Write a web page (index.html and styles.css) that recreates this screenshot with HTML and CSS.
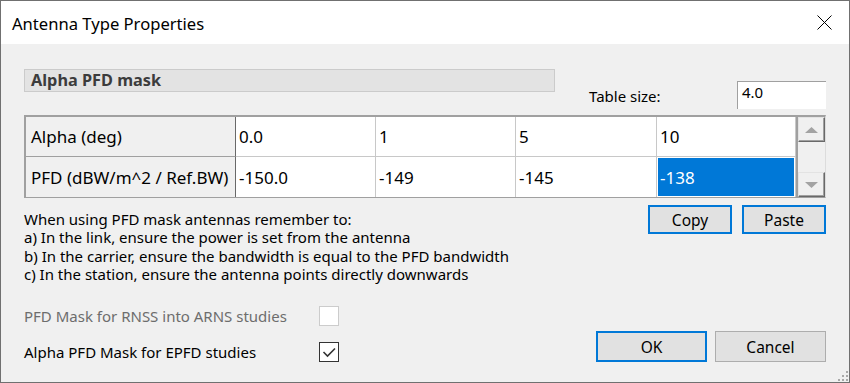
FILE: index.html
```html
<!DOCTYPE html>
<html lang="en">
  <head>
    <meta charset="UTF-8" />
    <title>Antenna Type Properties</title>
    <link rel="stylesheet" href="styles.css">
  </head>
  <body>
    <div class="dialog">
      <div class="titlebar">
        <span class="title">Antenna Type Properties</span>
        <svg class="close-icon" width="15" height="15" viewBox="0 0 15 15">
          <path d="M0.5 0.5 L14.5 14.5 M14.5 0.5 L0.5 14.5" stroke="#000" stroke-width="1" fill="none" />
        </svg>
      </div>

      <div class="content">
        <div class="top-row">
          <div class="group-header">Alpha PFD mask</div>
          <div class="table-size">
            <span class="table-size-label">Table size:</span>
            <div class="text-input">4.0</div>
          </div>
        </div>

        <div class="grid-box">
          <div class="grid">
            <div class="cell head">Alpha (deg)</div>
            <div class="cell">0.0</div>
            <div class="cell">1</div>
            <div class="cell">5</div>
            <div class="cell">10</div>
            <div class="cell head last-row">PFD (dBW/m^2 / Ref.BW)</div>
            <div class="cell last-row">-150.0</div>
            <div class="cell last-row">-149</div>
            <div class="cell last-row">-145</div>
            <div class="cell last-row selected">-138</div>
          </div>
          <div class="vscroll">
            <div class="scroll-btn">
              <svg width="13" height="6" viewBox="0 0 13 6"><path d="M6.5 0 L13 6 L0 6 Z" fill="#a3a3a3" /></svg>
            </div>
            <div class="scroll-track"></div>
            <div class="scroll-btn">
              <svg width="13" height="6" viewBox="0 0 13 6"><path d="M0 0 L13 0 L6.5 6 Z" fill="#a3a3a3" /></svg>
            </div>
          </div>
        </div>

        <div class="mid-row">
          <div class="notes">
            When using PFD mask antennas remember to:<br>
            a) In the link, ensure the power is set from the antenna<br>
            b) In the carrier, ensure the bandwidth is equal to the PFD bandwidth<br>
            c) In the station, ensure the antenna points directly downwards
          </div>
          <div class="clip-buttons">
            <button class="btn focus">Copy</button>
            <button class="btn focus">Paste</button>
          </div>
        </div>

        <div class="bottom-row">
          <div class="options">
            <span class="option-label disabled">PFD Mask for RNSS into ARNS studies</span>
            <span class="checkbox disabled"></span>
            <span class="option-label">Alpha PFD Mask for EPFD studies</span>
            <span class="checkbox">
              <svg width="18" height="18" viewBox="0 0 18 18">
                <path d="M3.5 9 L7.5 13 L15 5.5" stroke="#333" stroke-width="1.6" fill="none" />
              </svg>
            </span>
          </div>
          <div class="dialog-buttons">
            <button class="btn wide focus">OK</button>
            <button class="btn wide">Cancel</button>
          </div>
        </div>
      </div>

      <svg class="grip" width="12" height="12" viewBox="0 0 12 12">
        <rect x="9" y="1" width="2" height="2" fill="#a8a8a8" />
        <rect x="5" y="5" width="2" height="2" fill="#a8a8a8" />
        <rect x="9" y="5" width="2" height="2" fill="#a8a8a8" />
        <rect x="1" y="9" width="2" height="2" fill="#a8a8a8" />
        <rect x="5" y="9" width="2" height="2" fill="#a8a8a8" />
        <rect x="9" y="9" width="2" height="2" fill="#a8a8a8" />
      </svg>
    </div>
  </body>
</html>
```

FILE: styles.css
```css
body {
  margin: 0;
  font-family: "Noto Sans", sans-serif;
  font-size: 15px;
  color: #000;
}

.dialog {
  position: relative;
  width: 850px;
  height: 383px;
  box-sizing: border-box;
  border: 1px solid #707070;
  background-color: #f0f0f0;
  display: flex;
  flex-direction: column;
}

.titlebar {
  height: 43px;
  flex-shrink: 0;
  background-color: #fff;
  display: flex;
  align-items: center;
  justify-content: space-between;
  padding: 0 17px 0 11px;
}

.title {
  font-size: 16.6px;
  margin-top: 2px;
}

.content {
  flex: 1;
  display: flex;
  flex-direction: column;
  padding: 25px 23px 20px 23px;
}

/* header strip + table size */
.top-row {
  display: flex;
  height: 40px;
}

.group-header {
  width: 531px;
  height: 23px;
  box-sizing: border-box;
  border: 1px solid #cbcbcb;
  background-color: #e3e3e3;
  color: #3c3c3c;
  font-size: 16.3px;
  font-weight: bold;
  padding-left: 6px;
  line-height: 21px;
}

.table-size {
  margin-left: auto;
  margin-top: 12px;
  display: flex;
}

.table-size-label {
  width: 148px;
  padding-top: 5px;
}

.text-input {
  width: 89px;
  height: 28px;
  box-sizing: border-box;
  background-color: #fff;
  border-top: 1px solid #a0a0a0;
  border-left: 1px solid #a0a0a0;
  padding-left: 4px;
  line-height: 20px;
}

/* data grid */
.grid-box {
  margin-top: 6px;
  display: flex;
  width: 802px;
  box-sizing: border-box;
  border-top: 2px solid #a0a0a0;
  border-left: 2px solid #a0a0a0;
  border-bottom: 1px solid #a0a0a0;
  border-right: 1px solid #dcdcdc;
}

.grid {
  display: grid;
  grid-template-columns: 210px 140px 140px 141px 139px;
  grid-auto-rows: 40px;
  font-size: 17px;
}

.cell {
  box-sizing: border-box;
  display: flex;
  align-items: center;
  padding-left: 3px;
  background-color: #fff;
  border-right: 1px solid #c8c8c8;
  border-bottom: 1px solid #c8c8c8;
  white-space: nowrap;
}

.cell.head {
  background-color: #f0f0f0;
  padding-left: 5px;
  border-right-color: #696969;
  border-bottom-color: #a0a0a0;
}

.cell.last-row {
  border-bottom: none;
}

.cell.selected {
  background-color: #0078d7;
  color: #fff;
  box-shadow: inset 0 0 0 1px #fff;
}

.vscroll {
  width: 29px;
  box-sizing: border-box;
  border-left: 2px solid #a0a0a0;
  display: flex;
  flex-direction: column;
  background-color: #f0f0f0;
}

.scroll-btn {
  height: 25px;
  box-sizing: border-box;
  border: 1px solid;
  border-color: #e3e3e3 #696969 #696969 #e3e3e3;
  box-shadow: inset -1px -1px 0 #a0a0a0;
  display: flex;
  align-items: center;
  justify-content: center;
}

.scroll-track {
  flex: 1;
}

/* notes + copy/paste */
.mid-row {
  display: flex;
  justify-content: space-between;
  margin-top: 7px;
}

.notes {
  margin-top: 5px;
  line-height: 18.33px;
}

.clip-buttons {
  display: flex;
  gap: 10px;
}

.btn {
  width: 84px;
  height: 29px;
  box-sizing: border-box;
  border: 1px solid #adadad;
  background-color: #e1e1e1;
  font-family: inherit;
  font-size: 15.5px;
  color: #000;
  padding: 0;
}

.btn.focus {
  border: 2px solid #0078d7;
}

.btn.wide {
  width: 111px;
  height: 31px;
}

/* checkboxes + OK/Cancel */
.bottom-row {
  margin-top: auto;
  display: flex;
  justify-content: space-between;
  align-items: flex-end;
}

.options {
  display: grid;
  grid-template-columns: 295px 20px;
  row-gap: 16px;
  align-items: center;
}

.option-label.disabled {
  color: #6d6d6d;
}

.checkbox {
  width: 20px;
  height: 20px;
  box-sizing: border-box;
  border: 1px solid #333;
  background-color: #fff;
  display: flex;
  align-items: center;
  justify-content: center;
}

.checkbox.disabled {
  border-color: #cccccc;
}

.dialog-buttons {
  display: flex;
  gap: 8px;
}

.grip {
  position: absolute;
  right: 0;
  bottom: 0;
}
```
